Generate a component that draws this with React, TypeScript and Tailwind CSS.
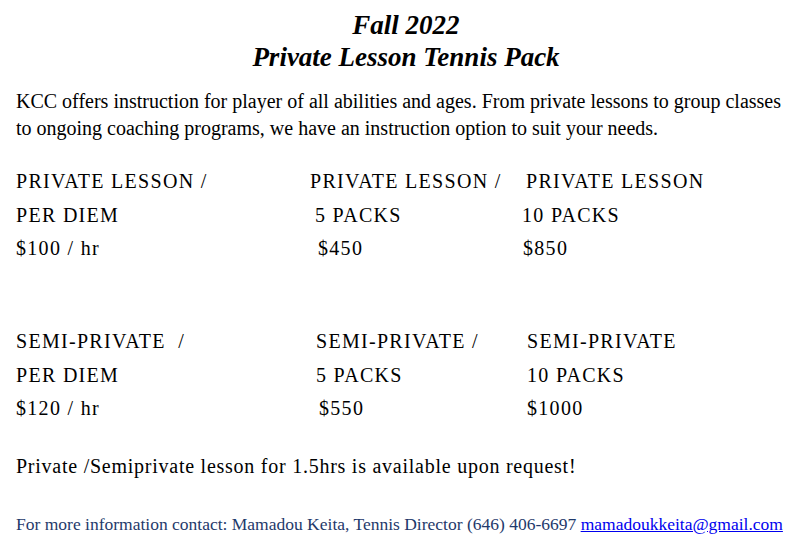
export default function App() {
  const serif = "font-['Liberation_Serif',_'Times_New_Roman',_serif]";
  return (
    <div className={`${serif} w-[792px] h-[552px] bg-white text-black overflow-hidden`}>
      <div className="pt-[9px] pl-[20px] text-center text-[27px] font-bold italic leading-[32px]">
        <p>Fall 2022</p>
        <p>Private Lesson Tennis Pack</p>
      </div>

      <p className="mt-[14.5px] pl-[16px] pr-[6px] text-[20px] leading-[27px]">
        KCC offers instruction for player of all abilities and ages. From private lessons to group classes to ongoing
        coaching programs, we have an instruction option to suit your needs.
      </p>

      {/* Private lessons */}
      <div className="mt-[23.5px] grid grid-cols-[294px_216px_1fr] pl-[16px] text-[20px] leading-[33.5px] tracking-[1.3px]">
        <p>PRIVATE LESSON /</p>
        <p>PRIVATE LESSON /</p>
        <p>PRIVATE LESSON</p>
        <p>PER DIEM</p>
        <p className="pl-[5px]">5 PACKS</p>
        <p className="-ml-[4px]">10 PACKS</p>
        <p>$100 / hr</p>
        <p className="pl-[8px]">$450</p>
        <p className="-ml-[3px]">$850</p>
      </div>

      {/* Semi-private lessons */}
      <div className="mt-[59.5px] grid grid-cols-[300px_211px_1fr] pl-[16px] text-[20px] leading-[33.5px] tracking-[1.3px]">
        <p className="whitespace-pre">SEMI-PRIVATE  /</p>
        <p>SEMI-PRIVATE /</p>
        <p>SEMI-PRIVATE</p>
        <p>PER DIEM</p>
        <p>5 PACKS</p>
        <p>10 PACKS</p>
        <p>$120 / hr</p>
        <p className="pl-[3px]">$550</p>
        <p>$1000</p>
      </div>

      <p className="mt-[23.5px] px-[16px] text-[20px] leading-[34px] tracking-[0.75px]">
        Private /Semiprivate lesson for 1.5hrs is available upon request!
      </p>

      <p className="mt-[29px] pl-[16px] text-[17.5px] leading-[24px] whitespace-nowrap text-[#1f3a6b]">
        For more information contact: Mamadou Keita, Tennis Director (646) 406-6697{" "}
        <a href="mailto:mamadoukkeita@gmail.com" className="text-[#0000ee] underline">
          mamadoukkeita@gmail.com
        </a>
      </p>
    </div>
  );
}
